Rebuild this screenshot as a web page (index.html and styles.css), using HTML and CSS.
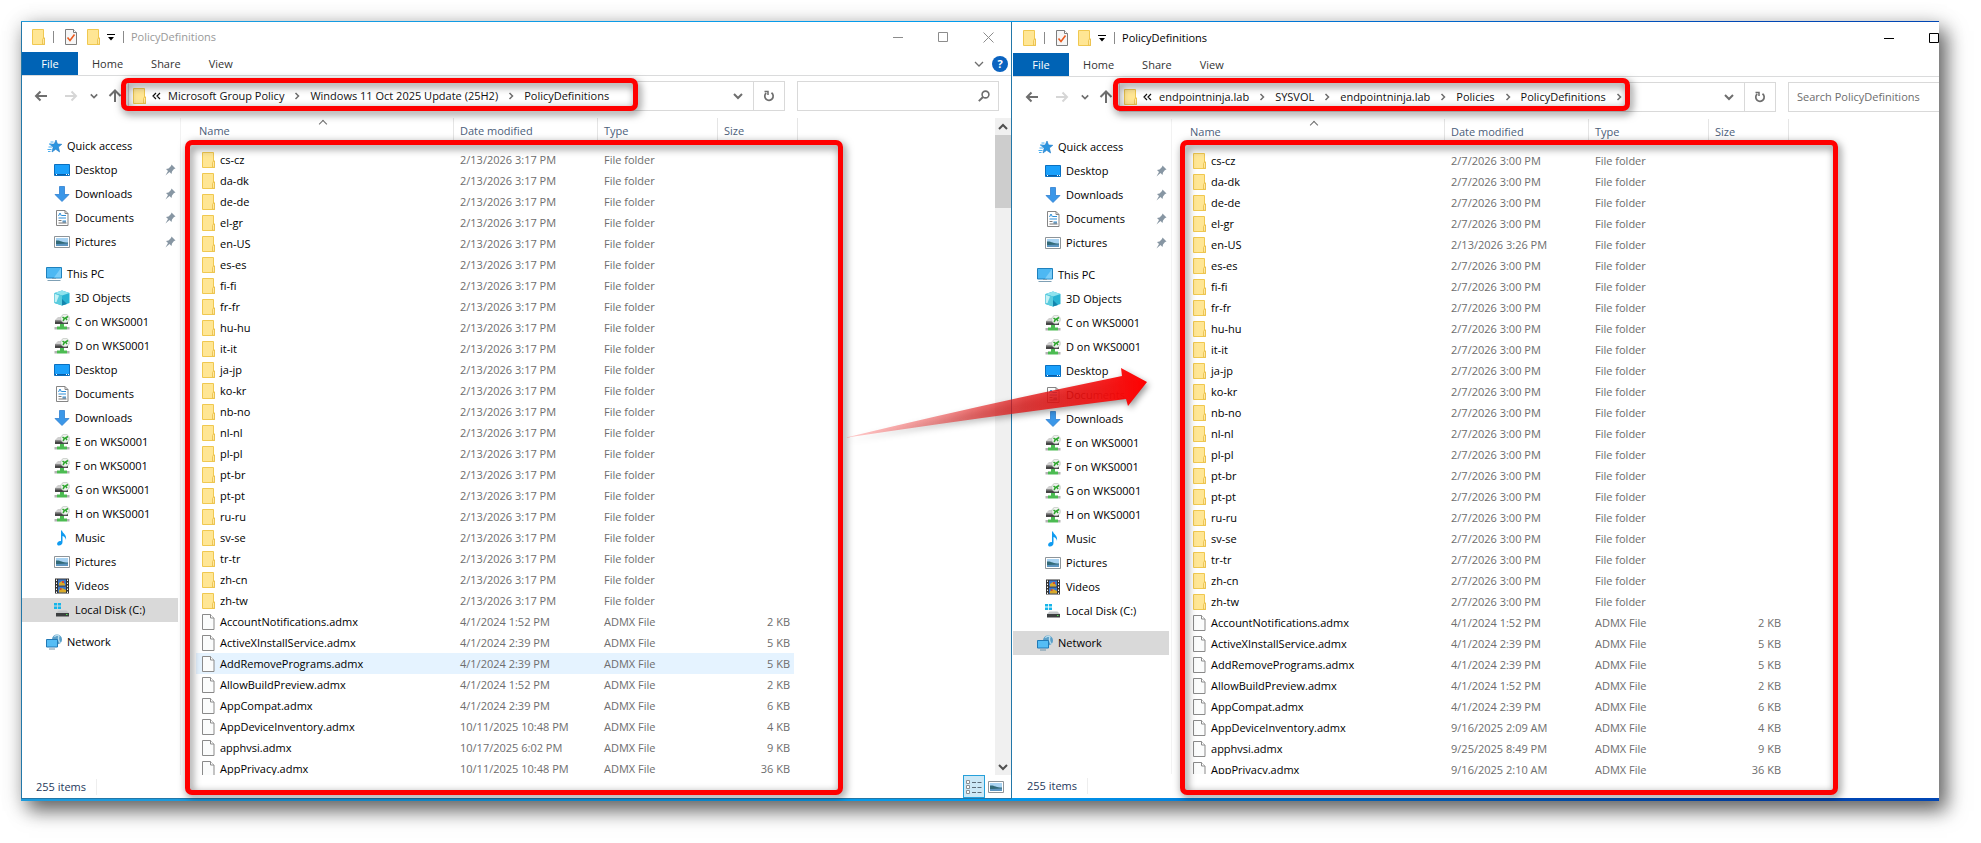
FILE: index.html
```html
<!DOCTYPE html>
<html lang="en">

<head>
  <meta charset="UTF-8">
  <meta name="viewport" content="width=device-width, initial-scale=1.0">
  <title>PolicyDefinitions</title>
  <link rel="stylesheet" href="styles.css">
</head>

<body>
  <!-- icons -->
  <svg class="sprite">
    <symbol id="folder" viewBox="0 0 13 16">
      <path d="M.5 .5h11v8.500h1v6.500H.5z" fill="#ffe694" stroke="#f0c850" />
      <path d="M10.500 15v-4.500l1-1.500h1v6.500z" fill="#ffe9a2" stroke="#e8bd45" stroke-width=".8" />
    </symbol>
    <symbol id="file" viewBox="0 0 13 16">
      <path d="M.5 .5h8l3.500 3.500v11.500H.5z" fill="#fbfcfc" stroke="#8a8a8a" />
      <path d="M8.500 .5V4H12" fill="#fff" stroke="#8a8a8a" />
    </symbol>
    <symbol id="check" viewBox="0 0 12 16">
      <path d="M.5 .5h8l3 3v12H.5z" fill="#f6f6f6" stroke="#7d7d7d" />
      <path d="M8.500 .5v3h3" fill="#fff" stroke="#7d7d7d" />
      <path d="M2.500 8.500l2.500 3 4.500-6" fill="none" stroke="#ea5a1e" stroke-width="1.600" />
    </symbol>
    <symbol id="star" viewBox="0 0 16 16">
      <path d="M10 2l1.500 4 4.300.300-3.400 2.700 1.200 5-3.900-2.700L6 14l1.200-5-3.500-2.700 4.500-.300z" fill="#2b95e0" stroke="#1c78c8" stroke-width=".6" />
      <path d="M4.500 4h3M3 6h2.500M2.500 9H6M1.500 11.500h4M2 13.500h2.500" stroke="#4aaef0" />
    </symbol>
    <symbol id="desktop" viewBox="0 0 16 16">
      <path d="M.5 2.500h15v11H.5z" fill="#1aa0fb" stroke="#0a70c0" />
      <path d="M1 12.500h14" stroke="#0a5ea8" />
      <path d="M2 12.500h1M12 12.500h1M14 12.500h1" stroke="#fff" />
    </symbol>
    <symbol id="downloads" viewBox="0 0 16 16">
      <path d="M5.500 .5h5v8H15L8 15.500 1 8.500h4.500z" fill="#3b97e8" stroke="#2f7fd0" stroke-width=".8" />
    </symbol>
    <symbol id="documents" viewBox="0 0 16 16">
      <path d="M2.500 .5h8.500l3 3v12H2.500z" fill="#fff" stroke="#858585" />
      <path d="M11 .5v3h3" fill="none" stroke="#858585" />
      <path d="M4.500 6l1.500-3 1.500 3M8 5.500h4M4.500 8h7.500M8.500 11h3.500" fill="none" stroke="#2f8fd8" />
      <path d="M4.500 10.500h3M4.500 13h8" stroke="#777" />
      <path d="M8.500 12h3.500" stroke="#3d6b8f" />
    </symbol>
    <symbol id="pictures" viewBox="0 0 16 16">
      <path d="M.5 2.500h15v11H.5z" fill="#fff" stroke="#8d9499" />
      <path d="M2 4h12v8H2z" fill="#a9d3f2" />
      <path d="M2 6.500c4-.5 6 2 12 2V12H2z" fill="#326a78" />
      <path d="M2 10c4 .4 8-.8 12-.5V12H2z" fill="#5d95c0" />
    </symbol>
    <symbol id="pc" viewBox="0 0 16 16">
      <path d="M.5 1.500h15v10.500H.5z" fill="#4db8f3" stroke="#1f81bd" />
      <path d="M15 2v9.500L8 11.500z" fill="#7ccdf8" />
      <path d="M6 12.500h4M1.500 14.500h13" stroke="#7fa0b5" />
    </symbol>
    <symbol id="objects" viewBox="0 0 16 16">
      <path d="M.5 3L8 .5 15.500 3v10L8 15.500.5 13z" fill="#29b3d3" />
      <path d="M.5 3L8 .5 15.500 3 8 5.500z" fill="#8fe3ee" />
      <path d="M.5 3L8 5.500v10L.5 13z" fill="#5accde" />
      <path d="M1 4l4 1.500L2.500 12 1 12z" fill="#c5f1f5" />
      <path d="M8 15.500V9l5 5z" fill="#1385ad" />
    </symbol>
    <symbol id="netdrive" viewBox="0 0 16 16">
      <path d="M1 6l3-3h7v3z" fill="#cfcfcf" />
      <path d="M1 6h13v4H1z" fill="#454545" />
      <path d="M1 6h7v1.500H1z" fill="#8d8d8d" />
      <circle cx="11" cy="4.500" r="4.300" fill="#eef2ee" stroke="#b4bcb4" stroke-width=".7" />
      <path d="M8.500 3l2 1.500-1.500 2.500M14 2.500l-2.500 1.500 1.500 2" fill="none" stroke="#2da52d" stroke-width="1.500" />
      <path d="M6 10h4v2.500h3V15.500H3v-3h3z" fill="#4cbb52" />
      <path d="M.5 13h2.500v2.500H.5zM13 13h2.500v2.500H13z" fill="#b3b3b3" />
    </symbol>
    <symbol id="music" viewBox="0 0 16 16">
      <path d="M8 .5c.5 3 5 4 4 9.500-.4-2-1.500-3.500-3.500-4V12c0 2-1.500 3.500-3.500 3.500S2.500 13.500 4 12c1-1 2-1 3-.8V.5z" fill="#109bf0" />
    </symbol>
    <symbol id="videos" viewBox="0 0 16 16">
      <path d="M1 .5h14v15H1z" fill="#333" />
      <path d="M4 1.500h8v6H4zM4 8.500h8v6H4z" fill="#3d78c8" />
      <path d="M5 5l3-2 3 3v1.500H5zM5 12l3-2 4 2v2.500H5z" fill="#d9a928" />
      <path d="M8 3h2v2H8zM6 10h1.500v2H6z" fill="#d04a3a" />
      <path d="M2.500 1.500v14M13.500 1.500v14" stroke="#fff" stroke-dasharray="1.500 1.500" />
    </symbol>
    <symbol id="disk" viewBox="0 0 16 16">
      <path d="M0 1h3v2.500H0zM3.800 1H7v2.500H3.800zM0 4.500h3V7H0zM3.800 4.500H7V7H3.800z" fill="#15b5ea" />
      <path d="M2 11l2.500-2.500h8L15 11z" fill="#c4c7c9" />
      <path d="M2 11h13v3.500H2z" fill="#3c3f40" />
      <path d="M12 12.500h1.500" stroke="#4ee04e" />
    </symbol>
    <symbol id="network" viewBox="0 0 16 16">
      <circle cx="11" cy="5.500" r="5" fill="#5a9fc8" />
      <path d="M8.500 3c1-2 4-2 5-.5M13 1.500c-1 3 0 6 1.500 7.500" stroke="#b9ddee" fill="none" stroke-width="1.300" />
      <path d="M.5 5.500h11V13H.5z" fill="#55bdf5" stroke="#2279b5" />
      <path d="M3 15h6" stroke="#6f93aa" />
    </symbol>
    <symbol id="pin" viewBox="0 0 12 12">
      <path d="M7.500 .5l4 4-1.500.500-2 2.500-.5 2.500-2-2L1.500 11.500 4 7 2 5l2.500-.500L7 2z" fill="#8796a3" />
    </symbol>
    <symbol id="back" viewBox="0 0 14 14">
      <path d="M13 7H2M6.500 2.500L2 7l4.500 4.500" fill="none" stroke="currentColor" stroke-width="2" />
    </symbol>
    <symbol id="forward" viewBox="0 0 14 14">
      <path d="M1 7h11M7.500 2.500L12 7l-4.500 4.500" fill="none" stroke="currentColor" stroke-width="2" />
    </symbol>
    <symbol id="up" viewBox="0 0 14 14">
      <path d="M7 13V2M1.500 7L7 1.500 12.500 7" fill="none" stroke="currentColor" stroke-width="2" />
    </symbol>
    <symbol id="down" viewBox="0 0 10 10">
      <path d="M1 3l4 4 4-4" fill="none" stroke="currentColor" stroke-width="2" />
    </symbol>
    <symbol id="thin-down" viewBox="0 0 10 10">
      <path d="M1 3l4 4 4-4" fill="none" stroke="currentColor" stroke-width="1.300" />
    </symbol>
    <symbol id="right" viewBox="0 0 6 8">
      <path d="M1.500 1l3 3-3 3" fill="none" stroke="currentColor" stroke-width="1.500" />
    </symbol>
    <symbol id="double-left" viewBox="0 0 9 8">
      <path d="M4 1L1 4l3 3M8 1L5 4l3 3" fill="none" stroke="currentColor" stroke-width="1.200" />
    </symbol>
    <symbol id="refresh" viewBox="0 0 12 12">
      <path d="M3.200 3A4.200 4.200 0 1 0 8.500 2.800" fill="none" stroke="currentColor" stroke-width="1.700" />
      <path d="M1.500 1.500H5V5" fill="none" stroke="currentColor" stroke-width="1.500" />
    </symbol>
    <symbol id="search" viewBox="0 0 12 12">
      <circle cx="7.500" cy="4.500" r="3.400" fill="none" stroke="currentColor" stroke-width="1.600" />
      <path d="M5 7L.8 11.200" stroke="currentColor" stroke-width="1.900" />
    </symbol>
    <symbol id="custom" viewBox="0 0 8 8">
      <path d="M0 1.500h8" stroke="#000" />
      <path d="M1 4h6L4 7.500z" />
    </symbol>
    <symbol id="minimize" viewBox="0 0 11 11">
      <path d="M0 5.500h10" stroke="currentColor" />
    </symbol>
    <symbol id="maximize" viewBox="0 0 11 11">
      <path d="M.5 .5h9v9H.5z" fill="none" stroke="currentColor" />
    </symbol>
    <symbol id="close" viewBox="0 0 11 11">
      <path d="M.5 .5l10 10M10.500 .5l-10 10" stroke="currentColor" />
    </symbol>
    <symbol id="details" viewBox="0 0 16 14">
      <path d="M.5 .5h3v3h-3zM.5 5.500h3v3h-3zM.5 10.500h3v3h-3z" fill="#fff" stroke="#8a8f93" />
      <path d="M6 2.500h4M11.500 2.500h4M6 7.500h4M11.500 7.500h4M6 12.500h4M11.500 12.500h4" stroke="#5c6c78" />
    </symbol>
  </svg>

  <main class="desk">
    <section class="window inactive">
      <header class="title-bar">
        <svg class="folder"><use href="#folder" /></svg>
        <i class="divider"></i>
        <button class="quick" aria-label="Properties"><svg class="check"><use href="#check" /></svg></button>
        <button class="quick" aria-label="New folder"><svg class="folder"><use href="#folder" /></svg></button>
        <button class="quick custom" aria-label="Customize toolbar"><svg><use href="#custom" /></svg></button>
        <i class="divider last"></i>
        <h1>PolicyDefinitions</h1>
        <div class="controls">
          <button aria-label="Minimize"><svg><use href="#minimize" /></svg></button>
          <button aria-label="Maximize"><svg><use href="#maximize" /></svg></button>
          <button aria-label="Close"><svg><use href="#close" /></svg></button>
        </div>
      </header>

      <nav class="tabs">
        <a class="file" href="#">File</a>
        <a href="#">Home</a>
        <a href="#">Share</a>
        <a href="#">View</a>
        <button class="expand" aria-label="Expand the ribbon"><svg><use href="#thin-down" /></svg></button>
        <button class="help" aria-label="Help">?</button>
      </nav>

      <div class="address-row">
        <button class="go" aria-label="Back"><svg><use href="#back" /></svg></button>
        <button class="go off" aria-label="Forward"><svg><use href="#forward" /></svg></button>
        <button class="go recent" aria-label="Recent locations"><svg><use href="#down" /></svg></button>
        <button class="go up" aria-label="Up"><svg><use href="#up" /></svg></button>
        <div class="address">
          <svg class="folder"><use href="#folder" /></svg>
          <svg class="double"><use href="#double-left" /></svg>
          <a href="#">Microsoft Group Policy</a>
          <svg class="right"><use href="#right" /></svg>
          <a href="#">Windows 11 Oct 2025 Update (25H2)</a>
          <svg class="right"><use href="#right" /></svg>
          <a href="#">PolicyDefinitions</a>
          <button class="history" aria-label="Previous locations"><svg><use href="#down" /></svg></button>
          <button class="refresh" aria-label="Refresh"><svg><use href="#refresh" /></svg></button>
        </div>
        <div class="search">
          <input type="text" aria-label="Search">
          <svg><use href="#search" /></svg>
        </div>
      </div>

      <div class="content">
        <nav class="tree" data-selected="Local Disk (C:)"></nav>
        <div class="list">
          <table id="left">
            <thead>
              <tr>
                <th class="name">Name<i class="caret"></i></th>
                <th class="date">Date modified</th>
                <th class="type">Type</th>
                <th class="size">Size</th>
              </tr>
            </thead>
            <tbody></tbody>
          </table>
        </div>
        <div class="scrollbar">
          <button aria-label="Scroll up"><svg class="flip"><use href="#down" /></svg></button>
          <i class="thumb"></i>
          <button class="bottom" aria-label="Scroll down"><svg><use href="#down" /></svg></button>
        </div>
      </div>

      <footer class="status">
        <span>255 items</span>
        <button class="view on" aria-label="Details"><svg><use href="#details" /></svg></button>
        <button class="view" aria-label="Large icons"><svg><use href="#pictures" /></svg></button>
      </footer>
      <div class="mark mark-address"></div>
      <div class="mark mark-list"></div>
    </section>

    <section class="window active">
      <header class="title-bar">
        <svg class="folder"><use href="#folder" /></svg>
        <i class="divider"></i>
        <button class="quick" aria-label="Properties"><svg class="check"><use href="#check" /></svg></button>
        <button class="quick" aria-label="New folder"><svg class="folder"><use href="#folder" /></svg></button>
        <button class="quick custom" aria-label="Customize toolbar"><svg><use href="#custom" /></svg></button>
        <i class="divider last"></i>
        <h1>PolicyDefinitions</h1>
        <div class="controls">
          <button aria-label="Minimize"><svg><use href="#minimize" /></svg></button>
          <button aria-label="Maximize"><svg><use href="#maximize" /></svg></button>
          <button aria-label="Close"><svg><use href="#close" /></svg></button>
        </div>
      </header>

      <nav class="tabs">
        <a class="file" href="#">File</a>
        <a href="#">Home</a>
        <a href="#">Share</a>
        <a href="#">View</a>
      </nav>

      <div class="address-row">
        <button class="go" aria-label="Back"><svg><use href="#back" /></svg></button>
        <button class="go off" aria-label="Forward"><svg><use href="#forward" /></svg></button>
        <button class="go recent" aria-label="Recent locations"><svg><use href="#down" /></svg></button>
        <button class="go up" aria-label="Up"><svg><use href="#up" /></svg></button>
        <div class="address">
          <svg class="folder"><use href="#folder" /></svg>
          <svg class="double"><use href="#double-left" /></svg>
          <a href="#">endpointninja.lab</a>
          <svg class="right"><use href="#right" /></svg>
          <a href="#">SYSVOL</a>
          <svg class="right"><use href="#right" /></svg>
          <a href="#">endpointninja.lab</a>
          <svg class="right"><use href="#right" /></svg>
          <a href="#">Policies</a>
          <svg class="right"><use href="#right" /></svg>
          <a href="#">PolicyDefinitions</a>
          <svg class="right"><use href="#right" /></svg>
          <button class="history" aria-label="Previous locations"><svg><use href="#down" /></svg></button>
          <button class="refresh" aria-label="Refresh"><svg><use href="#refresh" /></svg></button>
        </div>
        <div class="search">
          <input type="text" aria-label="Search" placeholder="Search PolicyDefinitions">
        </div>
      </div>

      <div class="content">
        <nav class="tree" data-selected="Network"></nav>
        <div class="list">
          <table id="right-list">
            <thead>
              <tr>
                <th class="name">Name<i class="caret"></i></th>
                <th class="date">Date modified</th>
                <th class="type">Type</th>
                <th class="size">Size</th>
              </tr>
            </thead>
            <tbody></tbody>
          </table>
        </div>
      </div>

      <footer class="status">
        <span>255 items</span>
      </footer>
      <div class="mark mark-address"></div>
      <div class="mark mark-list"></div>
    </section>

    <!-- arrow from the left list to the right one -->
    <svg class="arrow" viewBox="0 0 320 90">
      <defs>
        <linearGradient id="fade" x1="0" x2="1" y1="0" y2="0">
          <stop offset="0" stop-color="#f00" stop-opacity=".2" />
          <stop offset=".3" stop-color="#e81818" stop-opacity=".45" />
          <stop offset=".6" stop-color="#e01414" stop-opacity=".78" />
          <stop offset=".85" stop-color="#f41010" stop-opacity=".93" />
          <stop offset="1" stop-color="#f00" />
        </linearGradient>
      </defs>
      <path d="M4 78Q150 43 282 16L281 8 307 22 288 46 286 39Q150 56 4 78z" fill="url(#fade)" />
    </svg>
  </main>

  <script>
    // icon, text, level, pinned
    var tree = [
      ['star', 'Quick access', 0], ['desktop', 'Desktop', 1, true], ['downloads', 'Downloads', 1, true],
      ['documents', 'Documents', 1, true], ['pictures', 'Pictures', 1, true],
      ['pc', 'This PC', 0], ['objects', '3D Objects', 1], ['netdrive', 'C on WKS0001', 1],
      ['netdrive', 'D on WKS0001', 1], ['desktop', 'Desktop', 1], ['documents', 'Documents', 1],
      ['downloads', 'Downloads', 1], ['netdrive', 'E on WKS0001', 1], ['netdrive', 'F on WKS0001', 1],
      ['netdrive', 'G on WKS0001', 1], ['netdrive', 'H on WKS0001', 1], ['music', 'Music', 1],
      ['pictures', 'Pictures', 1], ['videos', 'Videos', 1], ['disk', 'Local Disk (C:)', 1],
      ['network', 'Network', 0]
    ]

    var folders = ['cs-cz', 'da-dk', 'de-de', 'el-gr', 'en-US', 'es-es', 'fi-fi', 'fr-fr', 'hu-hu', 'it-it', 'ja-jp',
      'ko-kr', 'nb-no', 'nl-nl', 'pl-pl', 'pt-br', 'pt-pt', 'ru-ru', 'sv-se', 'tr-tr', 'zh-cn', 'zh-tw']

    // name, date on the left, date on the right, size
    var files = [
      ['AccountNotifications.admx', '4/1/2024 1:52 PM', '4/1/2024 1:52 PM', '2 KB'],
      ['ActiveXInstallService.admx', '4/1/2024 2:39 PM', '4/1/2024 2:39 PM', '5 KB'],
      ['AddRemovePrograms.admx', '4/1/2024 2:39 PM', '4/1/2024 2:39 PM', '5 KB'],
      ['AllowBuildPreview.admx', '4/1/2024 1:52 PM', '4/1/2024 1:52 PM', '2 KB'],
      ['AppCompat.admx', '4/1/2024 2:39 PM', '4/1/2024 2:39 PM', '6 KB'],
      ['AppDeviceInventory.admx', '10/11/2025 10:48 PM', '9/16/2025 2:09 AM', '4 KB'],
      ['apphvsi.admx', '10/17/2025 6:02 PM', '9/25/2025 8:49 PM', '9 KB'],
      ['AppPrivacy.admx', '10/11/2025 10:48 PM', '9/16/2025 2:10 AM', '36 KB']
    ]

    function icon(id, cls) {
      return `<svg class="${cls}"><use href="#${id}" /></svg>`
    }

    function row(id, name, date, type, size, hover) {
      return `<tr${hover ? ' class="hover"' : ''}><td class="name">${icon(id, 'folder')}${name}</td>` +
        `<td>${date}</td><td>${type}</td><td class="size">${size}</td></tr>`
    }

    function fill(table, side) {
      var html = ''
      folders.forEach(function (name) {
        var date = side == 1 ? '2/13/2026 3:17 PM' : '2/7/2026 3:00 PM'
        if (side == 2 && name == 'en-US') {
          date = '2/13/2026 3:26 PM'
        }
        html += row('folder', name, date, 'File folder', '', false)
      })
      files.forEach(function (f) {
        html += row('file', f[0], f[side], 'ADMX File', f[3], side == 1 && f[0] == 'AddRemovePrograms.admx')
      })
      document.querySelector(table + ' tbody').innerHTML = html
    }

    document.querySelectorAll('.tree').forEach(function (nav) {
      nav.innerHTML = tree.map(function (t) {
        var cls = t[2] ? 'child' : 'root'
        if (t[1] == nav.dataset.selected) {
          cls += ' selected'
        }
        return `<a href="#" class="${cls}">${icon(t[0], 'icon')}${t[1]}${t[3] ? icon('pin', 'pin') : ''}</a>`
      }).join('')
    })

    fill('#left', 1)
    fill('#right-list', 2)
  </script>
</body>

</html>
```
FILE: styles.css
```css
* {
  box-sizing: border-box;
}

body {
  margin: 0;
  padding: 21px 42px 42px 21px;
  background: #fff;
  font: 11px/16px "Open Sans", "Noto Sans", sans-serif;
  color: #000;
  overflow: hidden;
}

a {
  color: inherit;
  text-decoration: none;
}

button {
  display: flex;
  align-items: center;
  justify-content: center;
  padding: 0;
  border: 0;
  background: none;
  font: inherit;
  color: #6e6e6e;
}

svg {
  display: block;
  flex: none;
}

.sprite {
  display: none;
}

.desk {
  position: relative;
  display: flex;
  height: calc(100vh - 63px);
  overflow: hidden;
  background: linear-gradient(to right, #1e9bdc, #009bee 50%, #0078d7 65%, #0046b4 90%);
  box-shadow: 8px 10px 18px rgba(0, 0, 0, 0.5), 2px 4px 20px rgba(0, 0, 0, 0.25);
}

.window {
  position: relative;
  display: flex;
  flex-direction: column;
  flex: none;
  width: 51.67%;
  margin: 1px 0 2px;
  background: #fff;
  border: solid #2377a8;
  border-width: 0 1px 1px;
}

.active {
  margin-bottom: 3px;
  padding-top: 1px;
  border-color: #fff;
  border-bottom: 0;
}

/* title bar */
.title-bar {
  display: flex;
  align-items: center;
  height: 30px;
  padding-left: 10px;
}

.folder {
  width: 13px;
  height: 16px;
}

.check {
  width: 12px;
  height: 16px;
}

.divider {
  width: 1px;
  height: 12px;
  margin: 0 11px 0 8px;
  background: #8a8a8a;
}

.divider.last {
  margin: 0 7px 0 8px;
}

.quick + .quick {
  margin-left: 10px;
}

.quick + .custom {
  margin-left: 7px;
}

.custom svg {
  width: 8px;
  height: 8px;
}

.title-bar h1 {
  margin: 0;
  font: inherit;
}

.inactive h1 {
  color: #999;
}

.controls {
  display: flex;
  margin-left: auto;
}

.controls button {
  width: 45px;
  height: 29px;
  color: #000;
}

.inactive .controls button {
  color: #8c8c8c;
}

.controls svg {
  width: 11px;
  height: 11px;
}

/* ribbon tabs */
.tabs {
  display: flex;
  align-items: stretch;
  height: 24px;
  border-bottom: 1px solid #dadbdc;
  line-height: 23px;
  color: #333;
}

.tabs a {
  padding: 0 14px;
}

.tabs .file {
  width: 56px;
  padding: 0;
  text-align: center;
  color: #fff;
  background: #0063b5;
}

.expand {
  margin-left: auto;
}

.help {
  align-self: center;
  width: 16px;
  height: 16px;
  margin: 0 3px 0 8px;
  border-radius: 8px;
  background: #0a63c0;
  color: #fff;
  font-weight: bold;
}

/* address bar */
.address-row {
  display: flex;
  height: 42px;
  padding: 5px 12px 7px 4px;
}

.go {
  width: 30px;
}

.go svg {
  width: 14px;
  height: 14px;
}

.go.off {
  color: #d6d6d6;
}

.go.recent {
  width: 16px;
}

.go.recent svg {
  width: 8px;
  height: 8px;
}

.go.up {
  width: 26px;
}

.address {
  display: flex;
  align-items: center;
  flex: 1;
  margin-right: 12px;
  padding-left: 4px;
  border: 1px solid #d9d9d9;
  color: #111;
}

.double {
  width: 9px;
  height: 8px;
  margin: 0 7px 0 6px;
}

.right {
  width: 6px;
  height: 8px;
  margin: 0 10px;
  color: #6e6e6e;
}

.history {
  width: 30px;
  margin-left: auto;
}

.refresh {
  align-self: stretch;
  width: 31px;
  border-left: 1px solid #d9d9d9;
}

.history svg,
.expand svg {
  width: 10px;
  height: 10px;
}

.refresh svg,
.search svg {
  width: 12px;
  height: 12px;
}

.search {
  display: flex;
  align-items: center;
  width: 202px;
  padding: 0 8px;
  border: 1px solid #d9d9d9;
  color: #6e6e6e;
}

.search input {
  flex: 1;
  min-width: 0;
  padding: 0;
  border: 0;
  outline: 0;
  font: inherit;
}

.search input::placeholder {
  color: #6d6d6d;
}

/* folder tree */
.content {
  display: flex;
  flex: 1;
  min-height: 0;
  overflow: hidden;
}

.tree {
  flex: none;
  width: 159px;
  padding: 16px 2px 0 0;
  border-right: 1px solid #f2f2f2;
}

.tree a {
  display: flex;
  align-items: center;
  gap: 5px;
  height: 24px;
  padding-left: 32px;
}

.tree .root {
  padding-left: 24px;
}

.tree .child + .root {
  margin-top: 8px;
}

.tree .selected {
  background: #d9d9d9;
}

.icon {
  width: 16px;
  height: 16px;
}

.pin {
  width: 12px;
  height: 12px;
  margin: 0 2px 0 auto;
}

/* file list */
.list {
  flex: 1;
  padding-left: 15px;
}

table {
  width: 602px;
  table-layout: fixed;
  border-collapse: separate;
  border-spacing: 0;
  color: #6d6d6d;
}

th {
  position: relative;
  height: 26px;
  padding: 0 6px;
  border-right: 1px solid #e5e5e5;
  font-weight: normal;
  line-height: 26px;
  text-align: left;
  vertical-align: top;
  color: #4c607a;
}

th.name {
  width: 258px;
  padding-left: 3px;
}

th.date {
  width: 144px;
}

th.type {
  width: 120px;
}

.caret {
  position: absolute;
  top: 3px;
  left: 124px;
  width: 6px;
  height: 6px;
  border: solid #6e6e6e;
  border-width: 1px 0 0 1px;
  transform: rotate(45deg);
}

tbody::before {
  content: "";
  display: block;
  height: 5px;
}

td {
  height: 21px;
  padding: 0 6px;
  white-space: nowrap;
}

td.name {
  display: flex;
  align-items: center;
  gap: 5px;
  color: #000;
}

td.size {
  padding-right: 4px;
  border-right: 4px solid transparent;
  background-clip: padding-box;
  text-align: right;
}

.hover td {
  background-color: #e5f3ff;
}

.scrollbar {
  display: flex;
  flex-direction: column;
  width: 16px;
  background: #f0f0f0;
}

.scrollbar button {
  height: 17px;
  color: #505050;
}

.scrollbar svg {
  width: 10px;
  height: 10px;
}

.scrollbar .flip {
  transform: rotate(180deg);
}

.scrollbar .bottom {
  margin-top: auto;
}

.thumb {
  height: 73px;
  background: #cdcdcd;
}

/* status bar */
.status {
  display: flex;
  align-items: center;
  height: 23px;
  padding-left: 14px;
  color: #1e395b;
}

.active .status {
  height: 24px;
}

.status span {
  margin-right: auto;
  padding-right: 10px;
  border-right: 1px solid #eee;
}

.view {
  width: 22px;
  height: 23px;
}

.view svg {
  width: 16px;
  height: 16px;
}

.view:last-child {
  margin-right: 4px;
}

.view.on {
  border: 1px solid #26a0da;
  background: #cce8f6;
}

/* red frames and arrow over the windows */
.mark {
  position: absolute;
  border: 5px solid #f00;
  border-radius: 7px;
  filter: drop-shadow(2px 3px 4px rgba(0, 0, 0, 0.55));
}

.mark-address {
  top: 56px;
  left: 99px;
  width: 517px;
  height: 33px;
}

.mark-list {
  top: 118px;
  bottom: 3px;
  left: 163px;
  width: 658px;
}

.active .mark-address {
  left: 100px;
}

.active .mark-list {
  left: 167px;
}

.arrow {
  position: absolute;
  top: 339px;
  left: 42.7%;
  width: 320px;
  height: 90px;
  filter: drop-shadow(2px 3px 3px rgba(0, 0, 0, 0.4));
}
```
